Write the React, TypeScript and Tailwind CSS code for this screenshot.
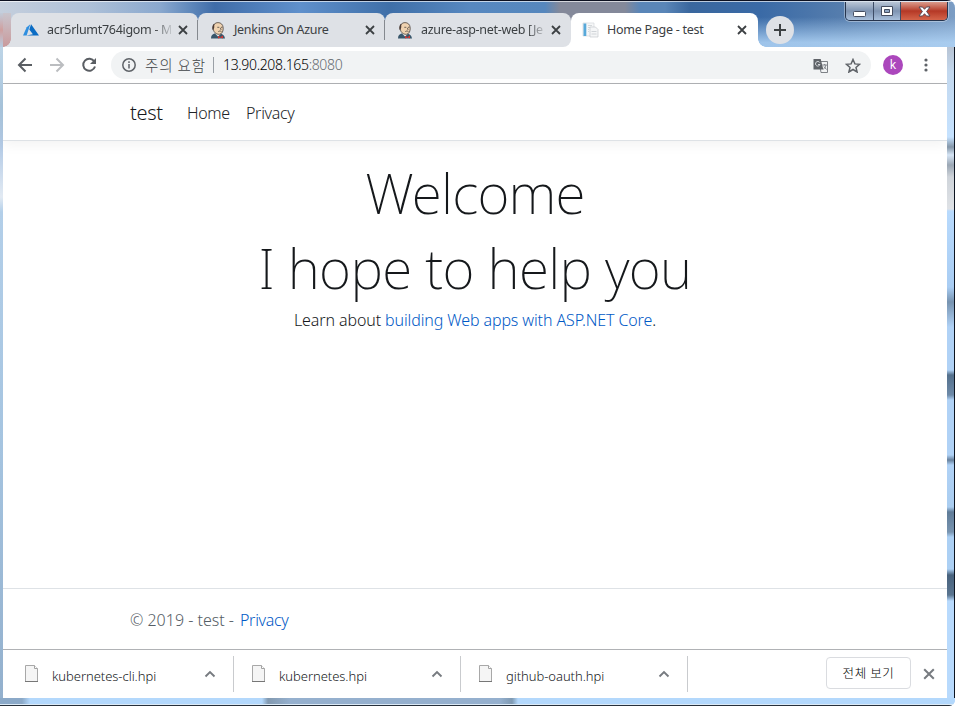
import type { ReactNode } from 'react';

function AzureIcon() {
  return (
    <svg width="16" height="16" viewBox="0 0 16 16" className="shrink-0">
      <path d="M7.300 2.200 3.700 5.300 0 13.400h3.600z" fill="#2f8fe0" />
      <path d="M8.100 2.200 6.300 7.500l3.600 4.700-6.600 1.200H16z" fill="#0b6cc4" />
    </svg>
  );
}

function JenkinsIcon() {
  return (
    <svg width="16" height="17" viewBox="0 0 16 17" className="shrink-0">
      <path d="M1 16.500c0-3 1.200-4.500 3.500-5.100l6 .2c2.600.6 4 2.200 4.500 4.900z" fill="#38566b" />
      <path d="M5 11.500 8 14.500l3-2.800-1-1.200H5.500z" fill="#eef0ee" />
      <path d="M3.200 6C3.200 2.500 5 .6 8 .6s5 2 5.200 5.200c.1 2.800-.7 6.200-3.900 6.500C6 12.500 3.200 10 3.200 6z" fill="#efd2b0" stroke="#4c4540" strokeWidth=".8" />
      <path d="M3.100 8.500C1.800 7 2 3 4.300 1.600 3.900 4 4.800 5.500 3.900 6.200z" fill="#4a3a34" />
      <path d="M7.300 5.300h2M11 5.300h1.500M8.300 9.600c1.200-.8 2.200-.7 3.200 0M10.400 5.800l.7 2.200" stroke="#4c4540" strokeWidth=".8" fill="none" />
      <path d="m8 14 2.500 1 2.500-1.500v3l-2.500-1L8 16.500z" fill="#d33833" />
    </svg>
  );
}

function PageIcon() {
  return (
    <svg width="17" height="16" viewBox="0 0 17 16" className="shrink-0">
      <path d="M1 1h11v13H1z" fill="#f6f7f8" stroke="#d5d9dc" strokeWidth=".7" />
      <path d="M1.500 1.500h2.800v12.500H1.500z" fill="#58a9da" />
      <path d="M6 3.500h4M6 5.500h2M6 7.500h1M6 9.500h1" stroke="#d5d8db" />
      <path d="M8 5h5.500L16 7.500V15H8z" fill="#f5f6f7" stroke="#c5c9cd" strokeWidth=".7" />
      <path d="M9.500 9.500h5M9.500 12h5" stroke="#d0d4d8" />
    </svg>
  );
}

function Cross({ size, color, width }: { size: number; color: string; width: number }) {
  return (
    <svg width={size} height={size} viewBox="0 0 10 10" className="shrink-0">
      <path d="m1 1 8 8M9 1 1 9" stroke={color} strokeWidth={width} fill="none" />
    </svg>
  );
}

function Tab({ icon, title, faded, active, divider }: { icon: ReactNode; title: string; faded?: boolean; active?: boolean; divider?: boolean }) {
  return (
    <div className={`flex h-[34px] shrink-0 items-center rounded-t-lg ${active ? 'bg-white pl-[11px]' : 'bg-[#dee1e6] pl-3'} ${divider || active ? 'w-[187px]' : 'w-[186px] rounded-br-lg'}`}>
      {icon}
      <div className={`whitespace-nowrap text-[12.500px] leading-5 text-[#3c4043] ${active ? 'ml-2 w-[123px] tracking-[-0.26px]' : 'ml-2 tracking-[-0.3px]'} ${divider ? 'w-[124px]' : 'w-[123px]'} ${faded ? '[mask-image:linear-gradient(to_right,black_86%,transparent_103%)]' : ''}`}>
        {title}
      </div>
      <div className="ml-[7px] flex w-[10px] justify-center"><Cross size={10} color="#3c4043" width={1.800} /></div>
      {divider && <div className="ml-auto h-5 w-px bg-[#85898f]" />}
    </div>
  );
}

function WindowControls() {
  return (
    <div className="mr-[7px] mt-px flex h-[19px] w-[103px] overflow-hidden rounded-b-[5px] border border-t-0 border-[#26344d] shadow-[0_0_0_1px_rgba(255,255,255,0.35)]">
      <div className="flex w-[28px] items-center justify-center border-r border-[#3d4c66] bg-linear-to-b from-[#b9c5d6] via-[#7f94b2] via-50% to-[#a9c0dc]">
        <svg width="13" height="6" viewBox="0 0 13 6" className="mt-1.5"><rect x=".5" y=".5" width="12" height="5" rx="1" fill="#fff" stroke="#454d60" /></svg>
      </div>
      <div className="flex w-[27px] items-center justify-center border-r border-[#3d4c66] bg-linear-to-b from-[#b9c5d6] via-[#7f94b2] via-50% to-[#a9c0dc]">
        <svg width="12" height="10" viewBox="0 0 12 10"><path d="M.5.500h11v9H.5z" fill="#fff" stroke="#454d60" /><path d="M3.500 3.500h5v3h-5z" fill="#8fa6c4" stroke="#454d60" /></svg>
      </div>
      <div className="flex flex-1 items-center justify-center bg-linear-to-b from-[#d99a8c] via-[#b53826] via-50% to-[#d5644a]">
        <svg width="13" height="11" viewBox="0 0 13 11">
          <path d="M1 1h3.500l2 2.300L8.500 1H12L8.600 5.500 12 10H8.500l-2-2.300-2 2.300H1l3.400-4.500z" fill="#fff" stroke="#4b4353" strokeWidth=".9" />
        </svg>
      </div>
    </div>
  );
}

function TitleBar() {
  return (
    <div className="flex h-[47px] items-start border-t border-[#0c1020] bg-[linear-gradient(to_bottom,rgba(255,255,255,0.65)_0,rgba(255,255,255,0.65)_1px,transparent_1px,transparent_35%,rgba(176,212,246,0.85)_90%),linear-gradient(to_right,#c5cfdd_0,#adc0d8_90px,#8aa8ce_160px,#5f88bb_190px,#3f6ca8_215px,#5f90cc_300px,#3f6fa8_390px,#5788c0_470px,#5687bd_545px,#84899a_560px,#84899a_625px,#5a86b8_640px,#5a86b8_665px,#3a679e_690px,#3a6aa6_760px,#587fae_850px,#7c9dc4_955px)]">
      <div className="mt-3 h-[34px] w-[3px] shrink-0 bg-linear-to-b from-[#c1cbd9] via-[#cf9f9f] to-[#b5cbe0]" />
      <div className="mt-3 flex h-[34px] w-2 shrink-0 flex-col bg-linear-to-b from-[#c9c5cd] to-[#c99a9c]">
        <div className="mt-auto h-2 w-2 bg-[radial-gradient(circle_at_0_0,transparent_7.500px,#dee1e6_8px)]" />
      </div>
      <div className="mt-3 flex">
        <Tab icon={<AzureIcon />} title="acr5rlumt764igom - M" faded divider />
        <Tab icon={<JenkinsIcon />} title="Jenkins On Azure" divider />
        <div className="bg-[linear-gradient(to_bottom,transparent_50%,white_50%)]">
          <Tab icon={<JenkinsIcon />} title="azure-asp-net-web [Je" faded />
        </div>
        <Tab icon={<PageIcon />} title="Home Page - test" active />
      </div>
      <div className="mt-[38px] h-2 w-2 bg-[radial-gradient(circle_at_100%_0,transparent_7.500px,white_8px)]" />
      <div className="mt-[15px] flex size-7 items-center justify-center rounded-full bg-[#dee1e6]">
        <svg width="12" height="12" viewBox="0 0 12 12"><path d="M6 0v12M0 6h12" stroke="#3c4043" strokeWidth="2" /></svg>
      </div>
      <div className="ml-auto"><WindowControls /></div>
    </div>
  );
}

function Toolbar() {
  return (
    <div className="flex h-[37px] shrink-0 items-start border-b border-[#b0b2b5] bg-white pl-[14px] pt-1">
      <svg width="80" height="28" viewBox="0 0 80 28" fill="none" strokeWidth="2" className="shrink-0">
        <path d="M15 14H2.500M8.500 7.500 2 14l6.500 6.500" stroke="#5a5e63" />
        <path d="M33 14h12.500M39.500 7.500 46 14l-6.500 6.500" stroke="#bbbdc0" />
        <path d="M77.300 10.500A6 6 0 1 0 78 15.500" stroke="#5a5e63" />
        <path d="M79 7v6h-6z" fill="#5a5e63" />
      </svg>
      <div className="ml-[14px] flex h-7 w-[760px] items-center rounded-full bg-[#f1f3f4] pl-[11px]">
        <svg width="14" height="14" viewBox="0 0 14 14" fill="none" stroke="#5f6368" strokeWidth="1.500" className="shrink-0">
          <circle cx="7" cy="7" r="6.200" /><path d="M7 6v4.500M7 3.300V5" />
        </svg>
        <span className="ml-[9px] w-[61px] whitespace-nowrap font-['Noto_Sans_CJK_KR',sans-serif] text-[14.500px] font-light leading-5 tracking-[0.9px] text-[#3f4347]">주의 요함</span>
        <span className="ml-[7px] h-4 w-px bg-[#9aa0a6]" />
        <span className="ml-[9px] whitespace-nowrap text-[14px] font-light leading-5 tracking-[-0.35px] text-black">
          13.90.208.165<span className="text-[#656b70]">:8080</span>
        </span>
        <svg width="15" height="15" viewBox="0 0 15 15" className="ml-auto shrink-0">
          <path d="M6 3.500h8.500v11H8z" fill="#f1f3f4" stroke="#70757a" strokeWidth=".9" />
          <path d="M.5 1h7.200l2.600 10.500H.5z" fill="#5f6368" />
          <path d="M6.800 4.600A2.300 2.300 0 1 0 7 6.500H5" fill="none" stroke="#d5d8dc" />
          <path d="M9.300 7h4.500M11.700 6v1M13 7c-.5 2-1.500 3.500-2.500 4M11 8.500l2.500 3" fill="none" stroke="#70757a" strokeWidth=".9" />
        </svg>
        <svg width="16" height="15" viewBox="0 0 16 15" className="ml-[17px] mr-[10px] shrink-0">
          <path d="m8 1.500 1.900 4.400 4.700.4-3.600 3.100 1.100 4.600L8 11.500 3.900 14 5 9.400 1.400 6.300l4.700-.4z" fill="none" stroke="#5f6368" strokeWidth="1.500" />
        </svg>
      </div>
      <div className="ml-3 mt-1 flex size-5 items-center justify-center rounded-full bg-[#ab47bc] text-[12px] leading-none text-white">k</div>
      <svg width="4" height="14" viewBox="0 0 4 14" fill="#5f6368" className="ml-[20.500px] mt-[7px]">
        <circle cx="2" cy="2" r="1.600" /><circle cx="2" cy="7" r="1.600" /><circle cx="2" cy="12" r="1.600" />
      </svg>
    </div>
  );
}

function WebPage() {
  return (
    <div className="flex min-h-0 flex-1 flex-col bg-white text-base font-light text-[#15181b]">
      <header className="flex h-[57px] shrink-0 items-center border-b border-[#dee2e6] pl-[127px] pt-px shadow-[0_4px_12px_rgba(0,0,0,0.05)]">
        <span className="w-[57px] text-[20px] leading-[30px] tracking-[-0.3px]">test</span>
        <span className="w-[59px] tracking-[-0.4px] text-[#202428]">Home</span>
        <span className="tracking-[-0.3px] text-[#202428]">Privacy</span>
      </header>
      <main className="flex-1 pt-[14px] text-center">
        <h1 className="h-[75px] text-[55px] font-extralight leading-[76px] tracking-[-0.8px]">Welcome</h1>
        <h1 className="h-[75px] text-[55px] font-extralight leading-[76px] tracking-[-0.650px]">I hope to help you</h1>
        <p className="pt-[3px] leading-6 tracking-[-0.110px]">
          Learn about <span className="text-[#0059c6]">building Web apps with ASP.NET Core</span>.
        </p>
      </main>
      <footer className="flex h-[61px] shrink-0 items-center border-t border-[#dee2e6] pl-[127px] pt-px text-[#555d65]">
        <span className="w-[110px]">© 2019 - test -</span>
        <span className="tracking-[-0.3px] text-[#0059c6]">Privacy</span>
      </footer>
    </div>
  );
}

function Download({ name }: { name: string }) {
  return (
    <div className="flex h-9 w-[227px] items-center border-r border-[#c9cbce] pl-[18px]">
      <svg width="13" height="17" viewBox="0 0 13 17" className="mb-[1px] shrink-0">
        <path d="M.5.500h9l3 3v13H.5z" fill="#f5f5f5" stroke="#a8a8a8" />
        <path d="M0 16.500h13" stroke="#777" /><path d="M9.500.5v3h3" fill="#fff" stroke="#a2a2a2" />
      </svg>
      <span className="ml-[14px] mt-1 w-[140px] whitespace-nowrap text-[13px] font-light leading-5 tracking-[-0.050px] text-[#15181b]">{name}</span>
      <svg width="12" height="8" viewBox="0 0 12 8" className="ml-[12px] shrink-0"><path d="m1.500 6.500 4.500-4.500 4.500 4.500" fill="none" stroke="#777b80" strokeWidth="1.900" /></svg>
    </div>
  );
}

function DownloadShelf() {
  return (
    <div className="flex h-[49px] shrink-0 items-center border-t border-[#b0b2b5] bg-white pb-px pl-1">
      <Download name="kubernetes-cli.hpi" />
      <Download name="kubernetes.hpi" />
      <Download name="github-oauth.hpi" />
      <div className="mb-px ml-auto flex h-8 w-[85px] items-center justify-center rounded border border-[#dadce0] font-['Noto_Sans_CJK_KR',sans-serif] text-[12.500px] font-light tracking-[0.6px] text-black">전체 보기</div>
      <div className="ml-[12px] mr-[12px]"><Cross size={12} color="#777b80" width={1.700} /></div>
    </div>
  );
}

export default function App() {
  return (
    <div className="flex h-[706px] w-[955px] flex-col overflow-hidden rounded-tr-lg rounded-br-md bg-[#b8dafd] font-['Noto_Sans','Noto_Sans_CJK_KR',sans-serif]">
      <TitleBar />
      <div className="flex h-[651px] shrink-0">
        <div className="w-[3px] bg-[linear-gradient(to_bottom,#bdd4e6_0,#a9c6de_60px,#b4cbe6_100px,#e2eaf3_150px,#b3cfe9_165px,#a5c4e0_400px,#93b0cd_100%)]" />
        <div className="flex w-[944px] flex-col">
          <Toolbar />
          <WebPage />
          <DownloadShelf />
        </div>
        <div className="w-[7px] bg-[linear-gradient(to_bottom,#b7c3d3_0,#c3d8ee_25px,#c5e2ff_90px,#8496a8_100px,#d6e5f5_108px,#9ba7b4_118px,#cfd4da_130px,#dfe2e6_162px,#b8dafd_164px,#a9cdf3_240px,#7793b0_255px,#b0d2f6_280px,#b0d2f6_323px,#54708c_328px,#6e8aa8_348px,#b0d2f6_353px,#b0d2f6_408px,#66809c_413px,#b0d2f6_418px,#aacdf0_460px,#607c98_465px,#7894b0_485px,#acd0f4_490px,#acd0f4_522px,#48627d_528px,#5a7590_548px,#b8dafd_554px)]" />
        <div className="w-px bg-[#0c1420]" />
      </div>
      <div className="flex h-[8px] flex-col">
        <div className="h-[6px] bg-[linear-gradient(to_right,#8ba9c8_0,#8ba9c8_22px,#b3d8fc_30px,#b3d8fc_262px,#8299b0_268px,#95b0ce_290px,#95b0ce_500px,#7f9ab3_512px,#b3d8fc_518px,#b3d8fc_955px)]" />
        <div className="h-px bg-[#dceaf6]" />
        <div className="h-px bg-[#27303b]" />
      </div>
    </div>
  );
}
